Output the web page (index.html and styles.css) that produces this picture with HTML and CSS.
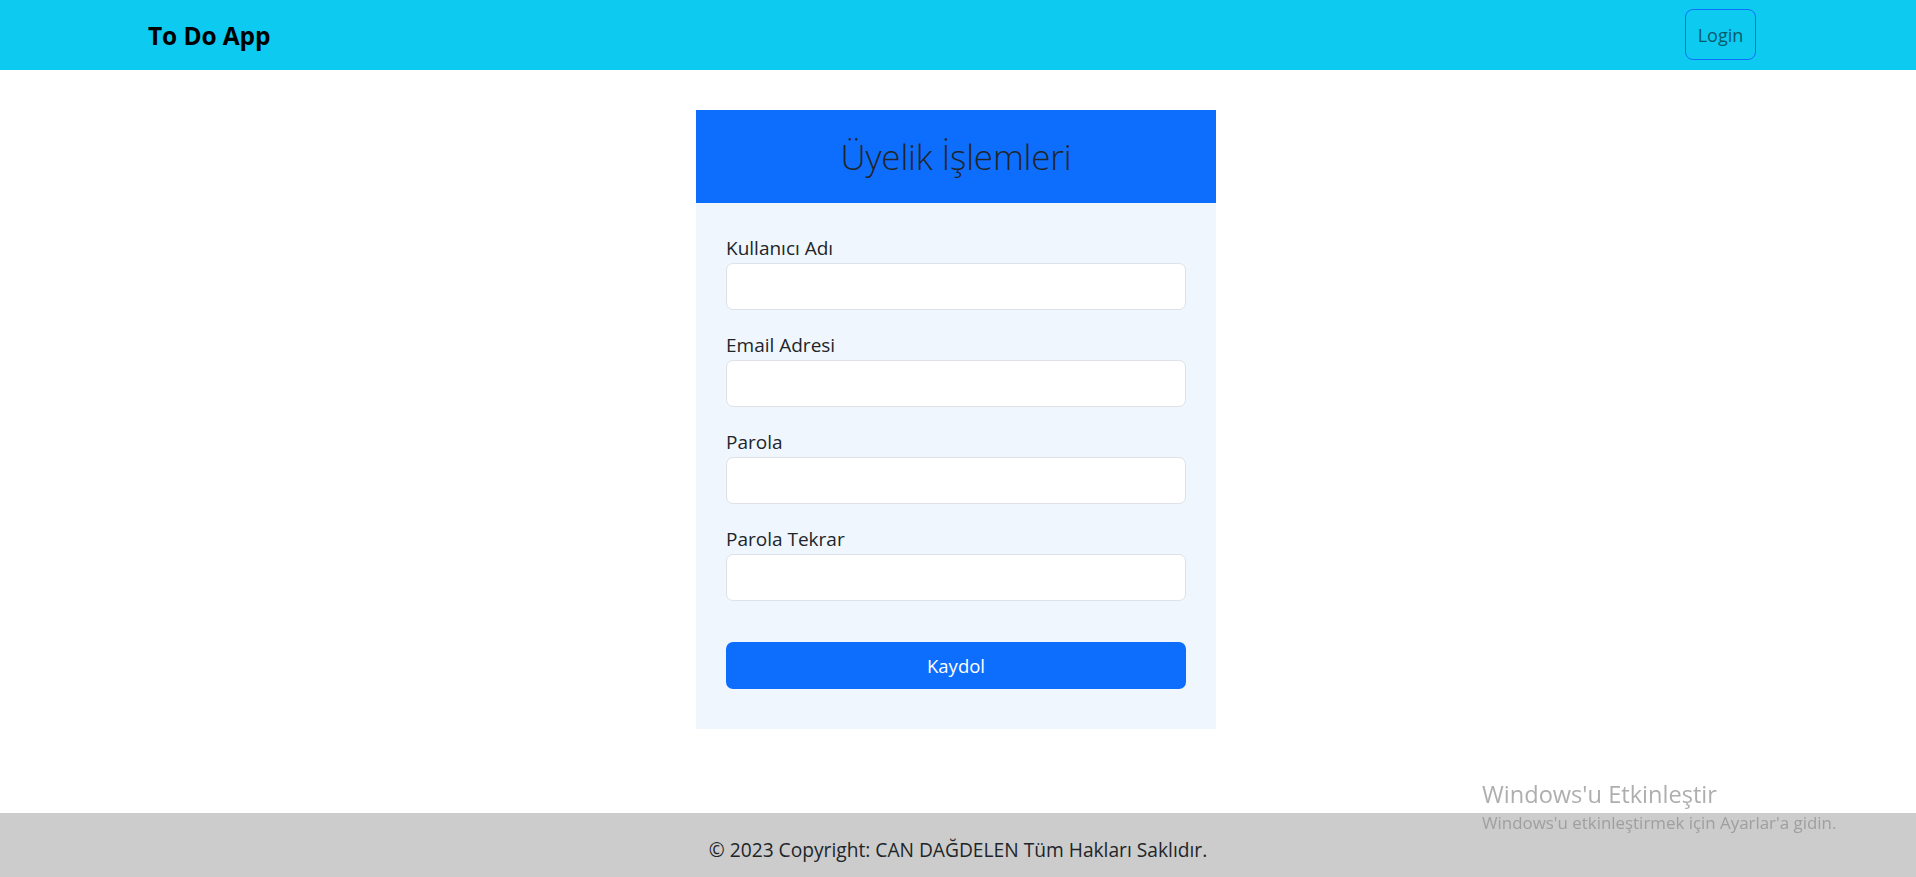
FILE: index.html
```html
<!DOCTYPE html>
<html lang="tr">
<head>
<meta charset="utf-8">
<title>To Do App</title>
<link rel="stylesheet" href="styles.css">
</head>
<body>
<nav class="navbar">
  <div class="nav-inner">
    <a class="brand" href="#">To Do App</a>
    <a class="login-btn" href="#">Login</a>
  </div>
</nav>
<main class="main">
  <div class="card">
    <div class="card-header">
      <h2 class="card-title">Üyelik İşlemleri</h2>
    </div>
    <form class="card-body">
      <div class="field">
        <label class="label">Kullanıcı Adı</label>
        <input class="input" type="text">
      </div>
      <div class="field">
        <label class="label">Email Adresi</label>
        <input class="input" type="email">
      </div>
      <div class="field">
        <label class="label">Parola</label>
        <input class="input" type="password">
      </div>
      <div class="field">
        <label class="label">Parola Tekrar</label>
        <input class="input" type="password">
      </div>
      <button class="submit" type="button">Kaydol</button>
    </form>
  </div>
</main>
<footer class="footer">© 2023 Copyright: CAN DAĞDELEN Tüm Hakları Saklıdır.</footer>
<div class="watermark">
  <div class="wm-title">Windows'u Etkinleştir</div>
  <div class="wm-sub">Windows'u etkinleştirmek için Ayarlar'a gidin.</div>
</div>
</body>
</html>
```

FILE: styles.css
```css
* { box-sizing: border-box; }
html, body { margin: 0; height: 100%; }
body {
  font-family: "Open Sans", "Noto Sans", sans-serif;
  font-size: 19px;
  color: #212529;
  display: flex;
  flex-direction: column;
  overflow: hidden;
  background: #fff;
}
.navbar {
  background: #0dcaf0;
  height: 70px;
  flex: none;
}
.nav-inner {
  width: 1650px;
  margin: 0 auto;
  padding: 0 27px 0 15px;
  height: 70px;
  display: flex;
  align-items: center;
  justify-content: space-between;
}
.brand {
  font-weight: 700;
  font-size: 24.5px;
  color: #000;
  text-decoration: none;
  letter-spacing: -0.1px;
}
.login-btn {
  display: flex;
  align-items: center;
  justify-content: center;
  width: 71px;
  height: 51px;
  margin-top: -1px;
  border: 1px solid #0d6efd;
  border-radius: 8px;
  color: #065b6c;
  text-decoration: none;
  font-size: 18px;
}
.main {
  flex: 1;
  display: flex;
  justify-content: center;
  align-items: flex-start;
  padding-top: 40px;
  padding-right: 4px;
}
.card {
  width: 520px;
}
.card-header {
  background: #0d6efd;
  height: 93px;
  display: flex;
  align-items: center;
  justify-content: center;
}
.card-title {
  margin: 0;
  font-weight: 300;
  font-size: 35px;
  color: #212529;
  letter-spacing: -0.2px;
}
.card-body {
  background: #eff6fe;
  padding: 30px 30px 40px;
  display: flex;
  flex-direction: column;
}
.field {
  display: flex;
  flex-direction: column;
  margin-bottom: 20px;
}
.label {
  font-size: 19px;
  line-height: 30px;
  color: #212529;
}
.input {
  height: 47px;
  border: 1px solid #dee2e6;
  border-radius: 7px;
  background: #fff;
  font: inherit;
  padding: 0 15px;
}
.submit {
  margin-top: 21px;
  height: 47px;
  border: none;
  border-radius: 7px;
  background: #0d6efd;
  color: #fff;
  font-family: inherit;
  font-size: 18.5px;
  cursor: pointer;
}
.footer {
  flex: none;
  height: 64px;
  background: #cccccc;
  text-align: center;
  padding-top: 22px;
  line-height: 30px;
  font-size: 19.2px;
  color: #212529;
}
.watermark {
  position: fixed;
  left: 1482px;
  top: 778px;
  color: rgba(140, 140, 140, 0.7);
  pointer-events: none;
}
.wm-title {
  font-size: 23.6px;
  line-height: 32px;
}
.wm-sub {
  font-size: 16.9px;
  line-height: 26px;
}
```
